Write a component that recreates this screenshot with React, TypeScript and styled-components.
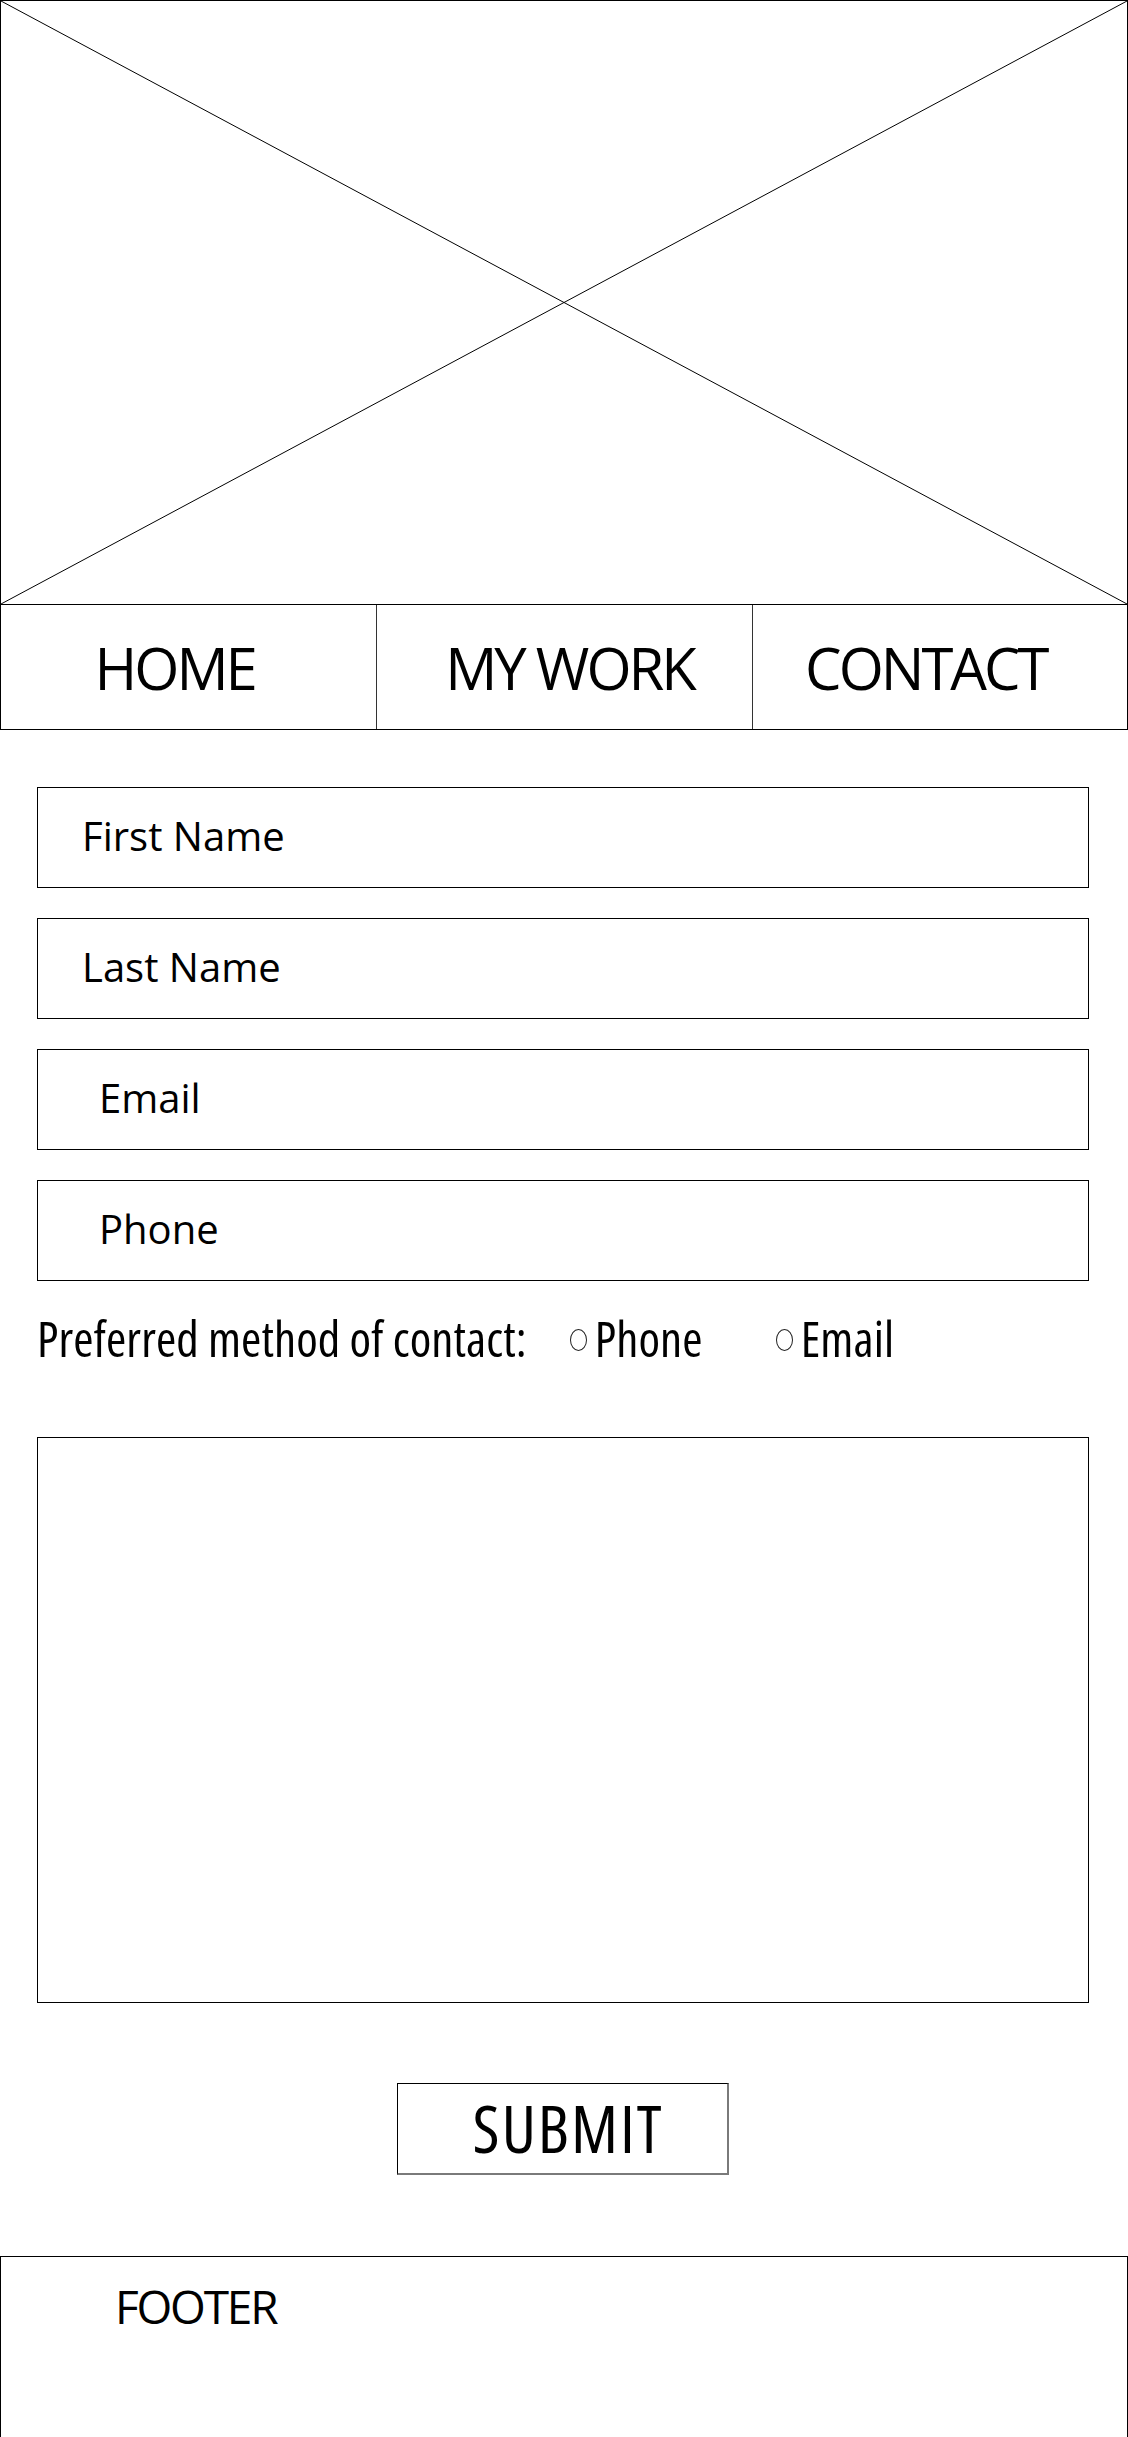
import styled, { createGlobalStyle } from "styled-components";

const GlobalStyle = createGlobalStyle`
  html, body {
    margin: 0;
    padding: 0;
    background: #fff;
  }
  body {
    font-family: "Open Sans", "Liberation Sans", sans-serif;
    color: #000;
  }
  * {
    box-sizing: border-box;
  }
`;

const Page = styled.div`
  width: 1128px;
  display: flex;
  flex-direction: column;
`;

const Hero = styled.div`
  height: 604px;
  border: 1px solid #000;
  border-bottom: none;
`;

const HeroArt = styled.svg`
  display: block;
  width: 100%;
  height: 100%;
`;

const Nav = styled.nav`
  height: 126px;
  display: grid;
  grid-template-columns: repeat(3, 1fr);
  border: 1px solid #000;
`;

const NavItem = styled.a<{ $shift?: number }>`
  display: flex;
  align-items: center;
  justify-content: center;
  font-size: 58px;
  font-stretch: 92%;
  letter-spacing: -3px;
  color: #000;
  text-decoration: none;
  padding-left: ${({ $shift = 0 }) => Math.max($shift, 0) * 2}px;
  padding-right: ${({ $shift = 0 }) => Math.max(-$shift, 0) * 2}px;
  & + & {
    border-left: 1px solid #333;
  }
`;

const Form = styled.form`
  display: flex;
  flex-direction: column;
  gap: 30px;
  width: 1052px;
  margin: 57px 0 0 37px;
`;

const Field = styled.input<{ $indent: number }>`
  height: 101px;
  width: 100%;
  border: 1px solid #000;
  border-radius: 0;
  padding: 0 0 4px ${({ $indent }) => $indent}px;
  font-family: "Open Sans", "Liberation Sans", sans-serif;
  font-size: 40px;
  color: #000;
  outline: none;
  &::placeholder {
    color: #000;
    opacity: 1;
  }
`;

const ContactRow = styled.div`
  display: flex;
  align-items: center;
  margin-top: 3px;
  height: 48px;
  font-size: 49px;
  line-height: 48px;
  font-stretch: 77%;
  letter-spacing: 0.1px;
`;

const RowLabel = styled.span`
  margin-right: 43px;
`;

const Option = styled.label<{ $gap?: number }>`
  display: flex;
  align-items: center;
  margin-right: ${({ $gap }) => $gap ?? 0}px;
`;

const RadioDot = styled.span`
  display: inline-block;
  width: 17px;
  height: 22px;
  border: 1px solid #222;
  border-radius: 50%;
  margin-right: 8px;
  margin-top: 4px;
`;

const Message = styled.textarea`
  height: 566px;
  width: 100%;
  margin-top: 45px;
  border: 1px solid #000;
  border-radius: 0;
  resize: none;
  outline: none;
`;

const Submit = styled.button`
  align-self: center;
  width: 332px;
  height: 92px;
  margin-top: 50px;
  margin-left: -1px;
  background: #fff;
  border: 1px solid #000;
  border-right: 2px solid #7a7a7a;
  border-bottom: 2px solid #7a7a7a;
  border-radius: 0;
  font-family: "Open Sans", "Liberation Sans", sans-serif;
  font-size: 66px;
  font-stretch: 79%;
  letter-spacing: 2px;
  line-height: 1;
  color: #000;
  padding: 0 0 4px 12px;
`;

const Footer = styled.footer`
  height: 182px;
  margin-top: 81px;
  border: 1px solid #000;
  padding: 22px 0 0 114px;
  font-size: 46px;
  font-stretch: 100%;
  letter-spacing: -2.2px;
  line-height: 1.2;
`;

export default function App() {
  return (
    <Page>
      <GlobalStyle />
      <Hero>
        <HeroArt viewBox="0 0 1126 603" preserveAspectRatio="none">
          <line x1="0" y1="0" x2="1126" y2="603" stroke="#000" strokeWidth="1" />
          <line x1="1126" y1="0" x2="0" y2="603" stroke="#000" strokeWidth="1" />
        </HeroArt>
      </Hero>
      <Nav>
        <NavItem href="#" $shift={-14}>HOME</NavItem>
        <NavItem href="#" $shift={5}>MY WORK</NavItem>
        <NavItem href="#" $shift={-14}>CONTACT</NavItem>
      </Nav>
      <Form onSubmit={(e) => e.preventDefault()}>
        <Field $indent={44} placeholder="First Name" />
        <Field $indent={44} placeholder="Last Name" />
        <Field $indent={61} placeholder="Email" />
        <Field $indent={61} placeholder="Phone" />
        <ContactRow>
          <RowLabel>Preferred method of contact:</RowLabel>
          <Option $gap={73}>
            <RadioDot />
            Phone
          </Option>
          <Option>
            <RadioDot />
            Email
          </Option>
        </ContactRow>
        <Message />
        <Submit type="submit">SUBMIT</Submit>
      </Form>
      <Footer>FOOTER</Footer>
    </Page>
  );
}
